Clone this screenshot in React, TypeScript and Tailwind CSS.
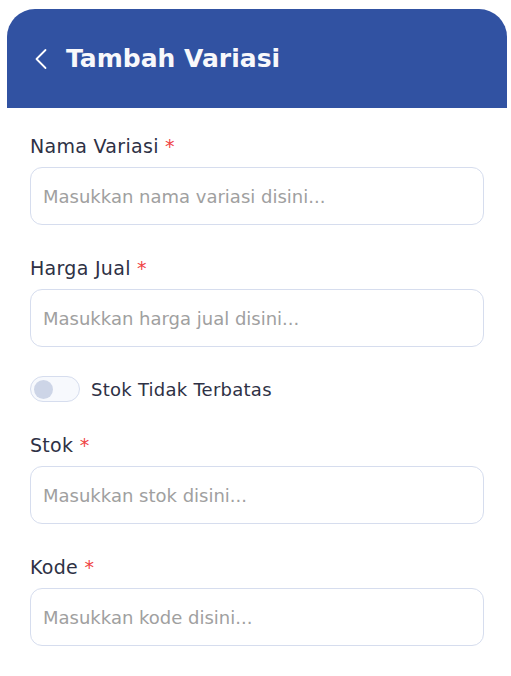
const fields = [
    { label: "Nama Variasi", placeholder: "Masukkan nama variasi disini..." },
    { label: "Harga Jual", placeholder: "Masukkan harga jual disini..." },
];

const fields2 = [
    { label: "Stok", placeholder: "Masukkan stok disini..." },
    { label: "Kode", placeholder: "Masukkan kode disini..." },
];

function Field({ label, placeholder, className = "" }: { label: string; placeholder: string; className?: string }) {
    return (
        <div className={`flex flex-col ${className}`}>
            <label className="text-[19px] leading-[26px] tracking-[0.3px] text-[#2e3145] mb-[8px]">
                {label} <span className="text-[#ef4444]">*</span>
            </label>
            <input
                className="h-[58px] w-full rounded-xl border border-[#d6ddee] bg-white px-[12px] text-[18px] text-[#2e3145] placeholder:text-[#a0a0a0] outline-none"
                placeholder={placeholder}
            />
        </div>
    );
}

export default function App() {
    return (
        <div className="w-[511px] h-[676px] bg-white pt-[9px]" style={{ fontFamily: "'DejaVu Sans', sans-serif" }}>
            {/* Header */}
            <div className="ml-[7px] mr-[4px] h-[99px] bg-[#3152a2] rounded-t-[28px] flex items-center pl-[28px]">
                <svg width="12" height="22" viewBox="0 0 12 22" fill="none" className="mt-[1px]">
                    <polyline points="10.5,2 1.5,11 10.5,20" stroke="white" strokeWidth="1.8" strokeLinecap="round" strokeLinejoin="round" />
                </svg>
                <h1 className="ml-[19px] text-[25px] font-bold text-[#f8f8fb]">Tambah Variasi</h1>
            </div>

            {/* Form */}
            <div className="pl-[30px] pr-[27px] pt-[25px] flex flex-col">
                <Field {...fields[0]} />
                <Field {...fields[1]} className="mt-[30px]" />

                <div className="mt-[29px] flex items-center gap-[11px] h-[26px]">
                    <div className="w-[50px] h-[26px] rounded-full border border-[#d6ddee] bg-[#f7f9fd] flex items-center px-[3px]">
                        <div className="w-[19px] h-[19px] rounded-full bg-[#cdd5e7]" />
                    </div>
                    <span className="text-[18px] tracking-[0.25px] text-[#2e3145]">Stok Tidak Terbatas</span>
                </div>

                <Field {...fields2[0]} className="mt-[30px]" />
                <Field {...fields2[1]} className="mt-[30px]" />
            </div>
        </div>
    );
}
